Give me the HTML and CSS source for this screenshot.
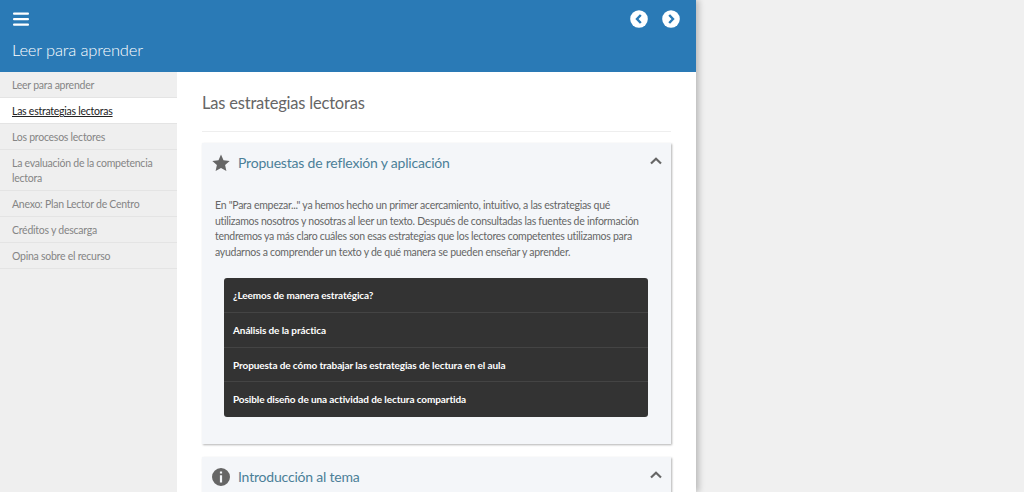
FILE: index.html
```html
<!DOCTYPE html>
<html lang="es">

<head>
    <meta charset="UTF-8">
    <meta name="viewport" content="width=device-width, initial-scale=1.0">
    <title>Las estrategias lectoras</title>
    <link rel="stylesheet" href="styles.css">
</head>

<body>
    <div class="page">
        <header class="top">
            <div class="top-icons">
                <svg class="burger" width="18" height="14" viewBox="0 0 18 14">
                    <rect x="1" y="0.5" width="16" height="2.2" rx="1" />
                    <rect x="1" y="6" width="16" height="2.2" rx="1" />
                    <rect x="1" y="11.5" width="16" height="2.2" rx="1" />
                </svg>
                <div class="arrows">
                    <svg width="18" height="18" viewBox="0 0 18 18">
                        <circle cx="9" cy="9" r="8.8" fill="#fff" />
                        <path d="M10.8 5 L7 9 L10.8 13" fill="none" stroke="#2a7ab6" stroke-width="2.4" />
                    </svg>
                    <svg width="18" height="18" viewBox="0 0 18 18">
                        <circle cx="9" cy="9" r="8.8" fill="#fff" />
                        <path d="M7.2 5 L11 9 L7.2 13" fill="none" stroke="#2a7ab6" stroke-width="2.4" />
                    </svg>
                </div>
            </div>
            <div class="site-title">Leer para aprender</div>
        </header>
        <div class="columns">
            <nav class="side">
                <a href="#">Leer para aprender</a>
                <a href="#" class="active">Las estrategias lectoras</a>
                <a href="#">Los procesos lectores</a>
                <a href="#">La evaluación de la competencia lectora</a>
                <a href="#">Anexo: Plan Lector de Centro</a>
                <a href="#">Créditos y descarga</a>
                <a href="#">Opina sobre el recurso</a>
            </nav>
            <main class="content">
                <h1>Las estrategias lectoras</h1>
                <section class="card">
                    <div class="card-head">
                        <svg class="card-icon" width="18" height="18" viewBox="0 0 18 18">
                            <path d="M9 0.6 L11.5 6.2 L17.7 6.9 L13.1 11 L14.4 17.1 L9 14 L3.6 17.1 L4.9 11 L0.3 6.9 L6.5 6.2 Z" />
                        </svg>
                        <h2>Propuestas de reflexión y aplicación</h2>
                        <svg class="chevron" width="12" height="8" viewBox="0 0 12 8">
                            <path d="M1 6.5 L6 1.8 L11 6.5" />
                        </svg>
                    </div>
                    <p>En "Para empezar..." ya hemos hecho un primer acercamiento, intuitivo, a las estrategias qué utilizamos nosotros y nosotras al leer un texto. Después de consultadas las fuentes de información tendremos ya más claro cuáles son esas estrategias que los lectores competentes utilizamos para ayudarnos a comprender un texto y de qué manera se pueden enseñar y aprender.</p>
                    <ul class="dark-list">
                        <li>¿Leemos de manera estratégica?</li>
                        <li>Análisis de la práctica</li>
                        <li>Propuesta de cómo trabajar las estrategias de lectura en el aula</li>
                        <li>Posible diseño de una actividad de lectura compartida</li>
                    </ul>
                </section>
                <section class="card">
                    <div class="card-head">
                        <svg class="card-icon" width="18" height="18" viewBox="0 0 18 18">
                            <path fill-rule="evenodd" d="M9 0 A9 9 0 1 0 9 18 A9 9 0 1 0 9 0 Z M7.9 3.4 H10.1 V5.6 H7.9 Z M7.9 7.2 H10.1 V14.4 H7.9 Z" />
                        </svg>
                        <h2>Introducción al tema</h2>
                        <svg class="chevron" width="12" height="8" viewBox="0 0 12 8">
                            <path d="M1 6.5 L6 1.8 L11 6.5" />
                        </svg>
                    </div>
                </section>
            </main>
        </div>
    </div>
</body>

</html>
```
FILE: styles.css
```css
html,
body {
    height: 100%;
}

body {
    margin: 0;
    height: 100vh;
    overflow: hidden;
    background-color: #f0f0f0;
    font-family: Lato, "Open Sans", sans-serif;
}

.page {
    width: 696px;
    height: 100%;
    background-color: #fff;
    box-shadow: 3px 0 6px rgba(0, 0, 0, 0.22);
}

.top {
    height: 72px;
    box-sizing: border-box;
    padding: 10px 16px 0 12px;
    background-color: #2a7ab6;
    color: #fff;
}

.top-icons {
    display: flex;
    justify-content: space-between;
    align-items: center;
    height: 18px;
}

.burger {
    fill: #fff;
}

.arrows {
    display: flex;
    gap: 14px;
}

.site-title {
    margin-top: 11px;
    font-size: 16.5px;
    font-weight: 300;
    line-height: 22px;
    letter-spacing: -0.15px;
}

.columns {
    display: flex;
    height: 420px;
    overflow: hidden;
}

.side {
    width: 177px;
    flex-shrink: 0;
    background-color: #efefef;
}

.side a {
    display: block;
    padding: 6px 12px 4px;
    border-bottom: 1px solid #e4e4e4;
    color: #858585;
    font-size: 10.5px;
    line-height: 15px;
    letter-spacing: -0.25px;
    text-decoration: none;
}

.side a.active {
    background-color: #fff;
    color: #222;
    text-decoration: underline;
}

.content {
    flex: 1;
    padding: 0 25px;
}

h1 {
    margin: 0 0 11px;
    padding: 20px 0 17px;
    border-bottom: 1px solid #eee;
    color: #666;
    font-size: 16.5px;
    font-weight: 400;
    line-height: 22px;
    letter-spacing: -0.2px;
}

.card {
    margin-bottom: 13px;
    padding: 0 23px 27px 13px;
    background-color: #f4f6f9;
    box-shadow: 1px 1px 2px rgba(0, 0, 0, 0.3);
}

.card-head {
    display: flex;
    align-items: center;
    gap: 8px;
    height: 39px;
}

.card-head h2 {
    flex: 1;
    margin: 0;
    color: #4b7f98;
    font-size: 14px;
    font-weight: 400;
    letter-spacing: -0.2px;
}

.card-icon {
    margin-left: -3px;
    fill: #666;
}

.chevron {
    margin-right: -14px;
    margin-bottom: 4px;
    fill: none;
    stroke: #666;
    stroke-width: 2.2;
}

.card p {
    margin: 16px 0 18px;
    color: #666;
    font-size: 10.5px;
    line-height: 15.5px;
    letter-spacing: -0.27px;
}

.dark-list {
    margin: 0 0 0 9px;
    padding: 0;
    list-style: none;
    border-radius: 3px;
    background-color: #333;
}

.dark-list li {
    height: 34.75px;
    box-sizing: border-box;
    padding: 0 9px;
    border-bottom: 1px solid #444;
    color: #fff;
    font-size: 10px;
    font-weight: 700;
    line-height: 34px;
    letter-spacing: -0.1px;
}

.dark-list li:last-child {
    border-bottom: none;
}
```
